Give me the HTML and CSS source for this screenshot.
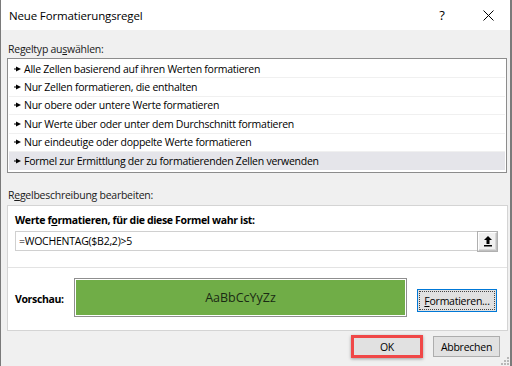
FILE: index.html
```html
<!DOCTYPE html>
<html lang="de">
<head>
<meta charset="utf-8">
<title>Neue Formatierungsregel</title>
<link rel="stylesheet" href="styles.css">
</head>
<body>
<div class="window">
  <div class="titlebar">
    <span class="title">Neue Formatierungsregel</span>
    <span class="help">?</span>
    <span class="close"><svg width="11" height="11" viewBox="0 0 11 11"><path d="M0.5 0.5L10.5 10.5M10.5 0.5L0.5 10.5" stroke="#000" stroke-width="1" fill="none"/></svg></span>
  </div>
  <div class="body">
    <div class="label">Regeltyp au<u>s</u>wählen:</div>
    <ul class="list">
      <li class="row"><svg class="arrow" width="7" height="6" viewBox="0 0 7 6"><path d="M0 3H3" stroke="#000" stroke-width="1"/><path d="M2 0.5L7 3L2 5.5Z" fill="#000"/></svg>Alle Zellen basierend auf ihren Werten formatieren</li>
      <li class="row"><svg class="arrow" width="7" height="6" viewBox="0 0 7 6"><path d="M0 3H3" stroke="#000" stroke-width="1"/><path d="M2 0.5L7 3L2 5.5Z" fill="#000"/></svg>Nur Zellen formatieren, die enthalten</li>
      <li class="row"><svg class="arrow" width="7" height="6" viewBox="0 0 7 6"><path d="M0 3H3" stroke="#000" stroke-width="1"/><path d="M2 0.5L7 3L2 5.5Z" fill="#000"/></svg>Nur obere oder untere Werte formatieren</li>
      <li class="row"><svg class="arrow" width="7" height="6" viewBox="0 0 7 6"><path d="M0 3H3" stroke="#000" stroke-width="1"/><path d="M2 0.5L7 3L2 5.5Z" fill="#000"/></svg>Nur Werte über oder unter dem Durchschnitt formatieren</li>
      <li class="row"><svg class="arrow" width="7" height="6" viewBox="0 0 7 6"><path d="M0 3H3" stroke="#000" stroke-width="1"/><path d="M2 0.5L7 3L2 5.5Z" fill="#000"/></svg>Nur eindeutige oder doppelte Werte formatieren</li>
      <li class="row selected"><svg class="arrow" width="7" height="6" viewBox="0 0 7 6"><path d="M0 3H3" stroke="#000" stroke-width="1"/><path d="M2 0.5L7 3L2 5.5Z" fill="#000"/></svg>Formel zur Ermittlung der zu formatierenden Zellen verwenden</li>
    </ul>
    <div class="label label2">R<u>e</u>gelbeschreibung bearbeiten:</div>
    <div class="desc">
      <div class="desc-top">
        <div class="bold">Werte f<u>o</u>rmatieren, für die diese Formel wahr ist:</div>
        <div class="input">
          <span class="formula">=WOCHENTAG($B2,2)&gt;5</span>
          <span class="pick"><svg width="10" height="12" viewBox="0 0 10 12"><path d="M5 1L1 5H3.5V9H6.5V5H9Z" fill="#000"/><rect x="1" y="10" width="8" height="1.5" fill="#000"/></svg></span>
        </div>
      </div>
      <div class="desc-bottom">
        <span class="bold">Vorschau:</span>
        <div class="preview"><div class="sample">AaBbCcYyZz</div></div>
        <div class="btn fmt"><span class="focusring"><u>F</u>ormatieren...</span></div>
      </div>
    </div>
    <div class="footer">
      <div class="btn ok">OK</div>
      <div class="btn cancel">Abbrechen</div>
    </div>
  </div>
  <svg class="grip" width="8" height="8" viewBox="0 0 8 8"><g fill="#b8b8b8"><rect x="6" y="0" width="2" height="2"/><rect x="3" y="3" width="2" height="2"/><rect x="6" y="3" width="2" height="2"/><rect x="0" y="6" width="2" height="2"/><rect x="3" y="6" width="2" height="2"/><rect x="6" y="6" width="2" height="2"/></g></svg>
</div>
</body>
</html>
```

FILE: styles.css
```css
* { box-sizing: border-box; }
html, body { margin: 0; padding: 0; }
body {
  width: 512px;
  height: 366px;
  overflow: hidden;
  font-family: "Open Sans", "Noto Sans", sans-serif;
  font-size: 10.5px;
  letter-spacing: -0.25px;
  color: #000;
  background: #f0f0f0;
}
.window {
  position: relative;
  width: 512px;
  height: 366px;
  border-left: 1px solid #7a7a7a;
  border-right: 2px solid #7a7a7a;
  background: #f0f0f0;
  display: flex;
  flex-direction: column;
}
.titlebar {
  height: 30px;
  background: #fff;
  display: flex;
  align-items: center;
  padding-left: 8px;
}
.title {
  font-size: 11.5px;
  letter-spacing: -0.15px;
  flex: 1;
}
.help {
  font-size: 13px;
  width: 20px;
  text-align: center;
  margin-right: 31px;
}
.close {
  display: flex;
  margin-right: 16px;
}
.body {
  padding: 11px 3px 0 6px;
  display: flex;
  flex-direction: column;
  flex: 1;
}
.label {
  height: 16px;
  line-height: 16px;
  padding-left: 1px;
  margin-bottom: 1px;
  color: #1a1a1a;
}
.list {
  list-style: none;
  margin: 0;
  padding: 1px 1px;
  border: 1px solid #8c8c8c;
  background: #fff;
  height: 115px;
}
.row {
  height: 18.4px;
  display: flex;
  align-items: center;
  padding-left: 5px;
  border-bottom: 1px solid #f0f0f0;
}
.row:last-child { border-bottom: none; }
.row.selected { background: #e5e5ea; }
.arrow {
  margin-right: 3px;
  flex: none;
}
.label2 {
  margin-top: 14px;
  margin-bottom: 2px;
}
.desc {
  border: 1px solid #d4d4d4;
  background: #fff;
  width: 501px;
}
.desc-top {
  padding: 6px 10px 16px 7px;
  border-bottom: 1px solid #e3e3e3;
}
.bold {
  font-weight: bold;
  letter-spacing: -0.35px;
  line-height: 16px;
  height: 16px;
}
.input {
  margin-top: 3px;
  height: 20px;
  border: 1px solid #d0d0d0;
  display: flex;
  align-items: center;
  justify-content: space-between;
  padding-left: 3px;
}
.formula { line-height: 18px; }
.pick {
  width: 19px;
  height: 19px;
  margin-right: -1px;
  background: #f0f0f0;
  border: 1px solid #c0c0c0;
  border-top-color: #fff;
  border-left-color: #fff;
  box-shadow: inset -1px -1px 0 #d8d8d8;
  display: flex;
  align-items: center;
  justify-content: center;
  outline: 1px solid #b0b0b0;
}
.desc-bottom {
  height: 62px;
  display: flex;
  align-items: center;
  padding: 0 10px 0 7px;
}
.desc-bottom .bold { width: 59px; }
.preview {
  width: 333px;
  height: 39px;
  border: 1px solid #8f8f8f;
  padding: 1px;
  margin-top: -4px;
  background: #fff;
}
.sample {
  height: 100%;
  background: #70ad47;
  display: flex;
  align-items: center;
  justify-content: center;
  font-size: 12.5px;
  letter-spacing: 0;
  color: #1a2a14;
}
.btn {
  background: #e1e1e1;
  border: 1px solid #adadad;
  display: flex;
  align-items: center;
  justify-content: center;
  color: #000;
}
.fmt {
  margin-left: 10px;
  width: 80px;
  height: 23px;
  border: 1px solid #0078d7;
  padding: 1px;
  margin-top: 3px;
}
.focusring {
  width: 100%;
  height: 100%;
  display: flex;
  align-items: center;
  justify-content: center;
  border: 1px dotted #444;
}
.footer {
  display: flex;
  justify-content: flex-end;
  align-items: center;
  margin-top: 4px;
  padding-right: 7px;
  gap: 10px;
}
.ok {
  width: 72px;
  height: 23px;
  border: 3px solid #f04848;
  box-shadow: 0 1px 3px rgba(0,0,0,0.35);
}
.cancel {
  width: 67px;
  height: 21px;
}
.grip {
  position: absolute;
  right: 1px;
  bottom: 1px;
}
```
